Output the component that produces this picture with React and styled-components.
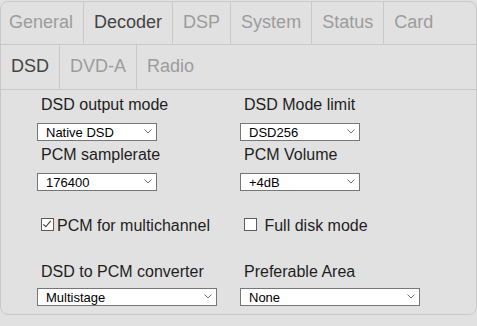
import styled, { createGlobalStyle } from "styled-components";

const GlobalStyle = createGlobalStyle`
  body {
    margin: 0;
    background: #e1e1e1;
    font-family: "Liberation Sans", Arial, sans-serif;
  }
`;

const Panel = styled.div`
  margin-top: 1px;
  width: 477px;
  box-sizing: border-box;
  border: 1px solid #c9c9c9;
  border-radius: 8px;
  background: #e1e1e1;
  padding-bottom: 8px;
`;

const TabRow = styled.div`
  display: flex;
  height: ${(p) => p.$h}px;
  border-bottom: 1px solid #c9c9c9;
`;

const Tab = styled.div`
  padding: 0 10px;
  line-height: ${(p) => p.$h}px;
  font-size: 18px;
  color: ${(p) => (p.$active ? "#444" : "#9c9c9c")};
  border-right: 1px solid #c9c9c9;
  &:first-child {
    padding-left: ${(p) => p.$first}px;
  }
  &:last-child {
    border-right: none;
  }
`;

const Content = styled.div`
  padding: 6px 0 0 36px;
`;

const Grid = styled.div`
  display: grid;
  grid-template-columns: 203px 203px;
  row-gap: 5px;
  margin-top: ${(p) => p.$top || 0}px;
`;

const Field = styled.div`
  display: flex;
  flex-direction: column;
  align-items: flex-start;
`;

const Label = styled.div`
  padding-left: 4px;
  font-size: 16px;
  line-height: 18px;
  color: #1e1e1e;
  margin-bottom: ${(p) => p.$gap}px;
`;

const SelectWrap = styled.div`
  position: relative;
  width: ${(p) => p.$w}px;
`;

const Select = styled.select`
  appearance: none;
  -webkit-appearance: none;
  display: block;
  width: 100%;
  height: 18px;
  box-sizing: border-box;
  margin: 0;
  padding: 0 0 0 8px;
  border: 1px solid #767676;
  border-radius: 0;
  background: #fff;
  color: #000;
  font-family: "Liberation Sans", Arial, sans-serif;
  font-size: 13px;
  outline: none;
`;

const Chevron = styled.svg`
  position: absolute;
  right: 5px;
  top: 6px;
  pointer-events: none;
`;

const CheckRow = styled.div`
  display: grid;
  grid-template-columns: 203px 203px;
  margin-top: 26px;
`;

const CheckLabel = styled.label`
  display: flex;
  align-items: flex-start;
  font-size: 16px;
  line-height: 18px;
  color: #1e1e1e;
`;

const Box = styled.input`
  appearance: none;
  -webkit-appearance: none;
  position: relative;
  width: 13px;
  height: 13px;
  box-sizing: border-box;
  margin: 1px 3px 0 4px;
  border: 1px solid #5c5c5c;
  background: #fff;
  &:checked::after {
    content: "";
    position: absolute;
    left: 3px;
    top: 0px;
    width: 3px;
    height: 7px;
    border: solid #333;
    border-width: 0 1px 1px 0;
    transform: rotate(40deg);
  }
`;

const topTabs = ["General", "Decoder", "DSP", "System", "Status", "Card"];
const subTabs = ["DSD", "DVD-A", "Radio"];

const Dropdown = ({ w, value }) => (
  <SelectWrap $w={w}>
    <Select defaultValue={value}>
      <option>{value}</option>
    </Select>
    <Chevron width="8" height="5" viewBox="0 0 8 5">
      <path d="M0.5 0.5 L4 4 L7.5 0.5" fill="none" stroke="#707070" strokeWidth="1" />
    </Chevron>
  </SelectWrap>
);

const App = () => {
  return (
    <>
      <GlobalStyle />
      <Panel>
        <TabRow $h={42}>
          {topTabs.map((t) => (
            <Tab key={t} $h={41} $first={8} $active={t === "Decoder"}>
              {t}
            </Tab>
          ))}
        </TabRow>
        <TabRow $h={44}>
          {subTabs.map((t) => (
            <Tab key={t} $h={43} $first={10} $active={t === "DSD"}>
              {t}
            </Tab>
          ))}
        </TabRow>
        <Content>
          <Grid>
            <Field>
              <Label $gap={9}>DSD output mode</Label>
              <Dropdown w={120} value="Native DSD" />
            </Field>
            <Field>
              <Label $gap={9}>DSD Mode limit</Label>
              <Dropdown w={120} value="DSD256" />
            </Field>
            <Field>
              <Label $gap={9}>PCM samplerate</Label>
              <Dropdown w={120} value="176400" />
            </Field>
            <Field>
              <Label $gap={9}>PCM Volume</Label>
              <Dropdown w={120} value="+4dB" />
            </Field>
          </Grid>
          <CheckRow>
            <CheckLabel>
              <Box type="checkbox" defaultChecked />
              PCM for multichannel
            </CheckLabel>
            <CheckLabel>
              <Box type="checkbox" />
              &nbsp;Full disk mode
            </CheckLabel>
          </CheckRow>
          <Grid $top={28}>
            <Field>
              <Label $gap={7}>DSD to PCM converter</Label>
              <Dropdown w={180} value="Multistage" />
            </Field>
            <Field>
              <Label $gap={7}>Preferable Area</Label>
              <Dropdown w={180} value="None" />
            </Field>
          </Grid>
        </Content>
      </Panel>
    </>
  );
};

export default App;
